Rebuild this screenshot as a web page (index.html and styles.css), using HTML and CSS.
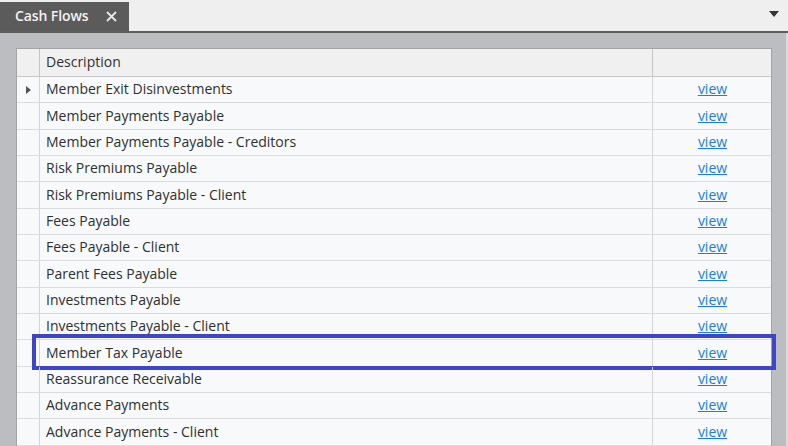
FILE: index.html
```html
<!DOCTYPE html>
<html>
<head>
<meta charset="utf-8">
<link rel="stylesheet" href="styles.css">
</head>
<body>
<div class="window">
  <div class="topbar">
    <div class="tab">
      <span class="tab-title">Cash Flows</span>
      <svg class="tab-close" width="11" height="11" viewBox="0 0 11 11"><path d="M1 1 L10 10 M10 1 L1 10" stroke="#e6e6e6" stroke-width="1.9"/></svg>
    </div>
    <div class="menu-arrow"><svg width="10" height="6" viewBox="0 0 10 6"><path d="M0 0 H10 L5 6 Z" fill="#333"/></svg></div>
  </div>
  <div class="panel">
    <div class="grid">
      <div class="row head">
        <div class="ind"></div>
        <div class="desc">Description</div>
        <div class="act"></div>
      </div>
      <div class="row"><div class="ind"><svg width="5" height="8" viewBox="0 0 5 8"><path d="M0 0 L5 4 L0 8 Z" fill="#555"/></svg></div><div class="desc">Member Exit Disinvestments</div><div class="act"><a href="#">view</a></div></div>
      <div class="row"><div class="ind"></div><div class="desc">Member Payments Payable</div><div class="act"><a href="#">view</a></div></div>
      <div class="row"><div class="ind"></div><div class="desc">Member Payments Payable - Creditors</div><div class="act"><a href="#">view</a></div></div>
      <div class="row"><div class="ind"></div><div class="desc">Risk Premiums Payable</div><div class="act"><a href="#">view</a></div></div>
      <div class="row"><div class="ind"></div><div class="desc">Risk Premiums Payable - Client</div><div class="act"><a href="#">view</a></div></div>
      <div class="row"><div class="ind"></div><div class="desc">Fees Payable</div><div class="act"><a href="#">view</a></div></div>
      <div class="row"><div class="ind"></div><div class="desc">Fees Payable - Client</div><div class="act"><a href="#">view</a></div></div>
      <div class="row"><div class="ind"></div><div class="desc">Parent Fees Payable</div><div class="act"><a href="#">view</a></div></div>
      <div class="row"><div class="ind"></div><div class="desc">Investments Payable</div><div class="act"><a href="#">view</a></div></div>
      <div class="row"><div class="ind"></div><div class="desc">Investments Payable - Client</div><div class="act"><a href="#">view</a></div></div>
      <div class="row marked"><div class="ind"></div><div class="desc">Member Tax Payable</div><div class="act"><a href="#">view</a></div><div class="highlight"></div></div>
      <div class="row"><div class="ind"></div><div class="desc">Reassurance Receivable</div><div class="act"><a href="#">view</a></div></div>
      <div class="row"><div class="ind"></div><div class="desc">Advance Payments</div><div class="act"><a href="#">view</a></div></div>
      <div class="row"><div class="ind"></div><div class="desc">Advance Payments - Client</div><div class="act"><a href="#">view</a></div></div>
    </div>
  </div>
</div>
</body>
</html>
```

FILE: styles.css
```css
* { box-sizing: border-box; }
html, body { margin: 0; padding: 0; }
body {
  width: 788px;
  height: 446px;
  overflow: hidden;
  font-family: "Open Sans", "Noto Sans", sans-serif;
  font-size: 14px;
  color: #303030;
  background: #bcbdc1;
}
.window { display: flex; flex-direction: column; height: 446px; }
.topbar {
  height: 33px;
  background: #efefef;
  border-bottom: 2px solid #5e5e5e;
  display: flex;
  align-items: flex-end;
  justify-content: space-between;
}
.tab {
  width: 129px;
  height: 29px;
  background: #5b5b5b;
  display: flex;
  align-items: center;
  padding-left: 15px;
  padding-bottom: 2px;
  gap: 18px;
}
.tab-title {
  color: #f2f2f2;
  font-weight: 600;
  font-size: 14px;
  letter-spacing: -0.1px;
}
.tab-close { margin-top: 1px; }
.menu-arrow {
  align-self: center;
  margin-right: 9px;
  margin-top: -4px;
  display: flex;
}
.panel {
  flex: 1;
  background: #bcbdc1;
  padding: 15px 14px 0 16px;
  border-right: 2px solid #dcdcde;
}
.grid {
  width: 756px;
  border: 1px solid #a4a4a6;
  border-bottom: none;
  background: #f7f9fb;
}
.row {
  display: grid;
  grid-template-columns: 23px 613px 118px;
  height: 26.35px;
  border-bottom: 1px solid #dcdcdc;
  position: relative;
}
.row > div { display: flex; align-items: center; }
.ind {
  justify-content: center;
  border-right: 1px solid #d4d4d4;
  padding-left: 1px;
}
.desc {
  padding-left: 6px;
  padding-bottom: 2px;
  border-right: 1px solid #d4d4d4;
  white-space: nowrap;
}
.act { justify-content: center; padding-left: 1px; padding-bottom: 2px; }
.act a { color: #1a7fd8; text-decoration: underline; }
.row.head {
  height: 28px;
  background: #f0f0f0;
  border-bottom: 1px solid #c8c8c8;
}
.row.head .ind, .row.head .desc { border-right-color: #c4c4c4; }
.highlight {
  position: absolute;
  top: -6px;
  left: 15px;
  right: -5px;
  bottom: -4px;
  border: 4px solid #3e46c8;
  pointer-events: none;
}
```
